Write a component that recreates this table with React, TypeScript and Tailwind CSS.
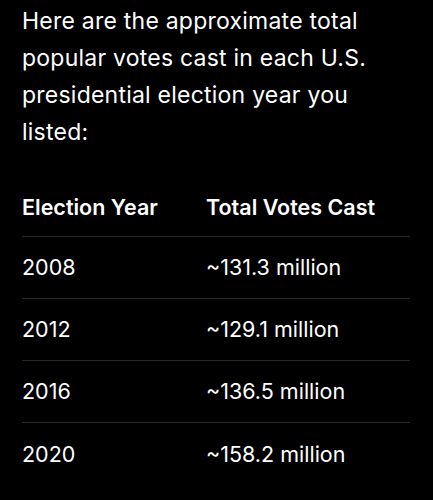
const ROWS = [
  { year: "2008", votes: "~131.3 million" },
  { year: "2012", votes: "~129.1 million" },
  { year: "2016", votes: "~136.5 million" },
  { year: "2020", votes: "~158.2 million" },
] as const;

export default function App() {
  return (
    <div className="min-h-[500px] w-[433px] overflow-hidden bg-black font-['Inter',sans-serif] text-white">
      <div className="px-[22px] pt-[3px]">
        <p className="max-w-[390px] text-[23px] leading-[37px] tracking-[0.01em]">
          Here are the approximate total popular votes cast in each U.S. presidential election year you listed:
        </p>

        <div className="mt-[28px] mr-[1px]">
          <div className="flex h-[58px] items-center border-b border-[#262626] text-[21.5px] font-semibold">
            <span className="w-[184px]">Election Year</span>
            <span>Total Votes Cast</span>
          </div>
          {ROWS.map((row, index) => (
            <div
              key={row.year}
              className={
                index === ROWS.length - 1
                  ? "flex h-[62px] items-center text-[21.5px]"
                  : "flex h-[62px] items-center border-b border-[#262626] text-[21.5px]"
              }
            >
              <span className="w-[184px]">{row.year}</span>
              <span>{row.votes}</span>
            </div>
          ))}
        </div>
      </div>
    </div>
  );
}
